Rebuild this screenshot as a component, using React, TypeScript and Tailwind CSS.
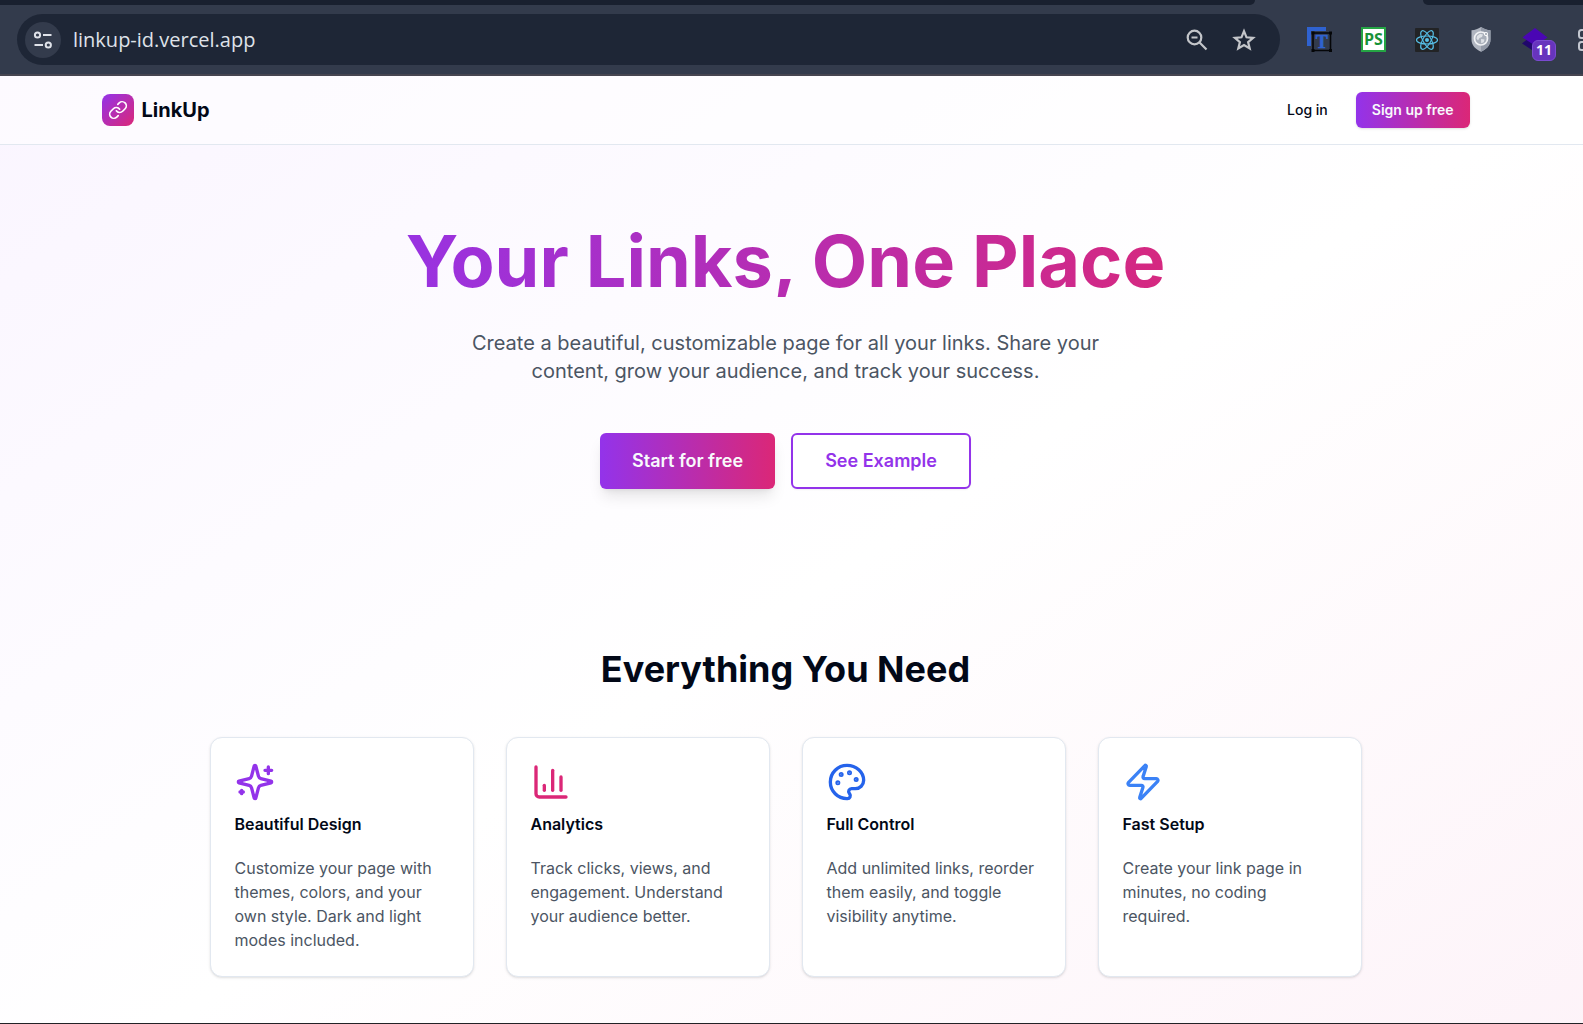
import { useState } from "react";
import type { ReactNode } from "react";
import { ChartColumn, Link, Palette, Zap } from "lucide-react";

interface FeatureCardProps {
  icon: ReactNode;
  title: string;
  description: string;
}

function SparklesIcon() {
  return (
    <svg
      className="size-10 text-[#9333ea]"
      viewBox="0 0 24 24"
      fill="none"
      stroke="currentColor"
      strokeWidth="2"
      strokeLinecap="round"
      strokeLinejoin="round"
    >
      <path d="M9.937 15.5A2 2 0 0 0 8.5 14.063l-6.135-1.582a.5.5 0 0 1 0-.962L8.5 9.936A2 2 0 0 0 9.937 8.5l1.582-6.135a.5.5 0 0 1 .963 0L14.063 8.5A2 2 0 0 0 15.5 9.937l6.135 1.581a.5.5 0 0 1 0 .964L15.5 14.063a2 2 0 0 0-1.437 1.437l-1.582 6.135a.5.5 0 0 1-.963 0z" />
      <path d="M20 3v4M22 5h-4M4 17v2M5 18H3" />
    </svg>
  );
}

const features: FeatureCardProps[] = [
  {
    icon: <SparklesIcon />,
    title: "Beautiful Design",
    description: "Customize your page with themes, colors, and your own style. Dark and light modes included.",
  },
  {
    icon: <ChartColumn className="size-10 text-[#db2777]" />,
    title: "Analytics",
    description: "Track clicks, views, and engagement. Understand your audience better.",
  },
  {
    icon: <Palette className="size-10 text-[#2563eb]" />,
    title: "Full Control",
    description: "Add unlimited links, reorder them easily, and toggle visibility anytime.",
  },
  {
    icon: <Zap className="size-10 text-[#3b82f6]" />,
    title: "Fast Setup",
    description: "Create your link page in minutes, no coding required.",
  },
];

function SiteInfoIcon() {
  return (
    <svg width="20" height="20" viewBox="0 0 20 20" fill="none" stroke="#dfe2e9" strokeWidth="2">
      <circle cx="4.5" cy="5" r="2.6" />
      <path d="M10 5h8.5M1.5 15h8.5" />
      <circle cx="15.3" cy="15" r="2.6" />
    </svg>
  );
}

function ZoomOutIcon() {
  return (
    <svg width="22" height="22" viewBox="0 0 22 22" fill="none" stroke="#c3c5c9" strokeWidth="2.200">
      <circle cx="8.500" cy="8.500" r="6.800" />
      <path d="M13.300 13.300l7.200 7.200M5.500 8.500h6" />
    </svg>
  );
}

function StarIcon() {
  return (
    <svg width="24" height="24" viewBox="0 0 24 24" fill="none" stroke="#c3c5c9" strokeWidth="2.200">
      <path d="M12 3.200l2.500 6.100 6.600.5-5 4.300 1.600 6.400L12 17.100l-5.700 3.400 1.600-6.400-5-4.300 6.600-.5z" />
    </svg>
  );
}

function TextToolIcon() {
  return (
    <svg width="25" height="25" viewBox="0 0 25 25">
      <path d="M0 0h19v4H4v15H0z" fill="#2f62d0" />
      <text
        x="14.800"
        y="21"
        textAnchor="middle"
        fontSize="18"
        fontWeight="700"
        fill="#2f62d0"
        stroke="#2f62d0"
        strokeWidth=".6"
        fontFamily="'Liberation Serif', serif"
      >
        T
      </text>
      <path d="M6 6h17.500v17.500H6z" fill="none" stroke="#050608" strokeWidth="1.600" />
      <path d="M4.500 4.500h3v3h-3zM22 4.500h3v3h-3zM4.500 22h3v3h-3zM22 22h3v3h-3z" fill="#050608" />
    </svg>
  );
}

function PsIcon() {
  return (
    <svg width="25" height="25" viewBox="0 0 25 25">
      <rect width="25" height="25" fill="#25a544" />
      <rect x="2" y="2" width="21" height="21" fill="#fff" />
      <text
        x="12.500"
        y="18"
        textAnchor="middle"
        fontSize="16"
        fontWeight="700"
        fill="#179238"
        fontFamily="'Open Sans', sans-serif"
      >
        PS
      </text>
    </svg>
  );
}

function ReactIcon() {
  return (
    <svg width="24" height="24" viewBox="0 0 24 24">
      <rect width="24" height="24" rx="1" fill="#222325" />
      <g fill="none" stroke="#56bfe6" strokeWidth="1.200">
        <ellipse cx="12" cy="12" rx="10.500" ry="4" />
        <ellipse cx="12" cy="12" rx="10.500" ry="4" transform="rotate(60 12 12)" />
        <ellipse cx="12" cy="12" rx="10.500" ry="4" transform="rotate(120 12 12)" />
      </g>
      <circle cx="12" cy="12" r="2" fill="#56bfe6" />
    </svg>
  );
}

function ShieldIcon() {
  return (
    <svg width="20" height="25" viewBox="0 0 20 25">
      <path d="M10 0c3 2 6 3 9.500 3.300v9.200c0 6-4 9.800-9.500 12.200C4.500 22.300.5 18.500.5 12.500V3.300C4 3 7 2 10 0z" fill="#b0b5c0" />
      <path d="M10 0c3 2 6 3 9.500 3.300v9.200c0 6-4 9.800-9.500 12.200z" fill="#9299a7" />
      <circle cx="10" cy="11.500" r="6.500" fill="#a9afba" stroke="#f1f2f5" strokeWidth="1.700" />
      <path d="M6 9l3-2.200 3 .7-1 2.500-2.500 1L7 13.500l-1.500-2zM10 12l3.500.5-.8 2.800-2.500 1z" fill="#dfe2e7" />
      <circle cx="15" cy="7" r="2" fill="#fff" />
      <circle cx="15" cy="7" r=".9" fill="#8b92a0" />
    </svg>
  );
}

function LayersIcon() {
  return (
    <svg width="26" height="24" viewBox="0 0 26 24">
      <path d="M0 15.500l5-4 8 5 8-5 5 4-13 8.500z" fill="#20076b" />
      <path d="M13 0l12.500 9.500L13 17.500.5 9.500z" fill="#4a06b4" />
    </svg>
  );
}

function ExtensionsIcon() {
  return (
    <svg width="22" height="22" viewBox="0 0 22 22" fill="none" stroke="#c3c7d0" strokeWidth="2">
      <rect x="1" y="1" width="8" height="8" rx="2.500" />
      <rect x="1" y="13" width="8" height="8" rx="2.500" />
      <rect x="13" y="1" width="8" height="8" rx="2.500" />
      <rect x="13" y="13" width="8" height="8" rx="2.500" />
    </svg>
  );
}

function ExtensionButton({ label, children }: { label: string; children: ReactNode }) {
  return (
    <button type="button" aria-label={label} className="flex h-[51px] w-[54px] shrink-0 items-center justify-center">
      {children}
    </button>
  );
}

function BrowserBar() {
  const [url, setUrl] = useState("linkup-id.vercel.app");

  return (
    <div className="shrink-0 border-b-2 border-[#464550] bg-[#333b4c]">
      <div className="flex h-[5px] justify-between">
        <div className="grow rounded-br-lg bg-[#19202f]" />
        <div className="w-[168px]" />
        <div className="w-[160px] rounded-bl-lg bg-[#19202f]" />
      </div>
      <div className="flex items-center py-[9px] pl-[17px]">
        <div className="flex h-[51px] grow items-center rounded-full bg-[#1e2636] pr-6 pl-2">
          <button
            type="button"
            aria-label="Site information"
            className="flex size-9 shrink-0 items-center justify-center rounded-full bg-[#333b4c]"
          >
            <SiteInfoIcon />
          </button>
          <input
            type="text"
            aria-label="Address"
            value={url}
            onChange={(e) => setUrl(e.target.value)}
            className="ml-3 min-w-0 grow bg-transparent font-['Open_Sans',sans-serif] text-[20px] text-[#dfe2e9] outline-none"
          />
          <button type="button" aria-label="Zoom out" className="mr-6">
            <ZoomOutIcon />
          </button>
          <button type="button" aria-label="Bookmark">
            <StarIcon />
          </button>
        </div>
        <div className="flex w-[303px] shrink-0 overflow-hidden pl-3">
          <ExtensionButton label="Text tool">
            <TextToolIcon />
          </ExtensionButton>
          <ExtensionButton label="PS">
            <PsIcon />
          </ExtensionButton>
          <ExtensionButton label="React">
            <ReactIcon />
          </ExtensionButton>
          <ExtensionButton label="Shield">
            <ShieldIcon />
          </ExtensionButton>
          <ExtensionButton label="Layers">
            <span className="relative">
              <LayersIcon />
              <span className="absolute top-3 left-2.5 flex h-[21px] w-6 items-center justify-center rounded-md border border-[#7a4bd0] bg-[#6734bd] font-['Open_Sans',sans-serif] text-sm font-bold text-white">
                11
              </span>
            </span>
          </ExtensionButton>
          <ExtensionButton label="Extensions">
            <ExtensionsIcon />
          </ExtensionButton>
        </div>
      </div>
    </div>
  );
}

function FeatureCard({ icon, title, description }: FeatureCardProps) {
  return (
    <div className="rounded-xl border border-slate-200 bg-white shadow-sm">
      <div className="p-6">
        {icon}
        <h3 className="mt-3.5 text-base leading-none font-semibold">{title}</h3>
      </div>
      <p className="px-6 pb-6 text-base text-[#4b5563]">{description}</p>
    </div>
  );
}

export default function App() {
  return (
    <div className="flex h-screen flex-col overflow-hidden border-b border-[#222226] font-[Inter,sans-serif] text-[#020817]">
      <BrowserBar />
      <div className="min-h-0 grow overflow-hidden">
        <div className="bg-linear-to-br/srgb from-[#faf5ff] via-white to-[#fdf2f8] pb-20">
          <header className="border-b border-slate-200 bg-white/50 pr-3">
            <nav className="mx-auto flex max-w-[1400px] items-center justify-between px-4 py-4">
              <a href="#" className="flex items-center gap-2">
                <span className="flex size-8 items-center justify-center rounded-lg bg-linear-to-br/srgb from-[#9333ea] to-[#db2777]">
                  <Link className="size-5 text-white" />
                </span>
                <span className="text-xl font-bold">LinkUp</span>
              </a>
              <div className="flex items-center gap-4">
                <a href="#login" className="flex h-9 items-center rounded-md px-3 text-sm font-medium">
                  Log in
                </a>
                <a
                  href="#signup"
                  className="flex h-9 items-center rounded-md bg-linear-to-r/srgb from-[#9333ea] to-[#db2777] px-4 text-sm font-semibold text-slate-50 shadow-sm"
                >
                  Sign up free
                </a>
              </div>
            </nav>
          </header>

          <main className="pr-3">
            <section className="px-4 py-20 text-center">
              <h1 className="mx-auto mb-8 max-w-4xl bg-linear-to-r/srgb from-[#9333ea] to-[#db2777] bg-clip-text text-7xl leading-none font-bold text-transparent">
                Your Links, One Place
              </h1>
              <p className="mx-auto mb-12 max-w-2xl text-xl text-[#4b5563]">
                Create a beautiful, customizable page for all your links. Share your content, grow your audience, and
                track your success.
              </p>
              <div className="flex justify-center gap-4">
                <a
                  href="#start"
                  className="flex h-14 items-center rounded-md bg-linear-to-r/srgb from-[#9333ea] to-[#db2777] px-8 text-lg font-semibold text-slate-50 shadow-lg"
                >
                  Start for free
                </a>
                <a
                  href="#example"
                  className="flex h-14 items-center rounded-md border-2 border-[#9333ea] bg-white px-8 text-lg font-semibold text-[#9333ea] shadow-xs"
                >
                  See Example
                </a>
              </div>
            </section>

            <section className="px-4 py-20">
              <h2 className="mb-12 text-center text-4xl font-bold">Everything You Need</h2>
              <div className="mx-auto grid max-w-6xl grid-cols-4 gap-8">
                {features.map((feature) => (
                  <FeatureCard key={feature.title} {...feature} />
                ))}
              </div>
            </section>
          </main>
        </div>
      </div>
    </div>
  );
}
